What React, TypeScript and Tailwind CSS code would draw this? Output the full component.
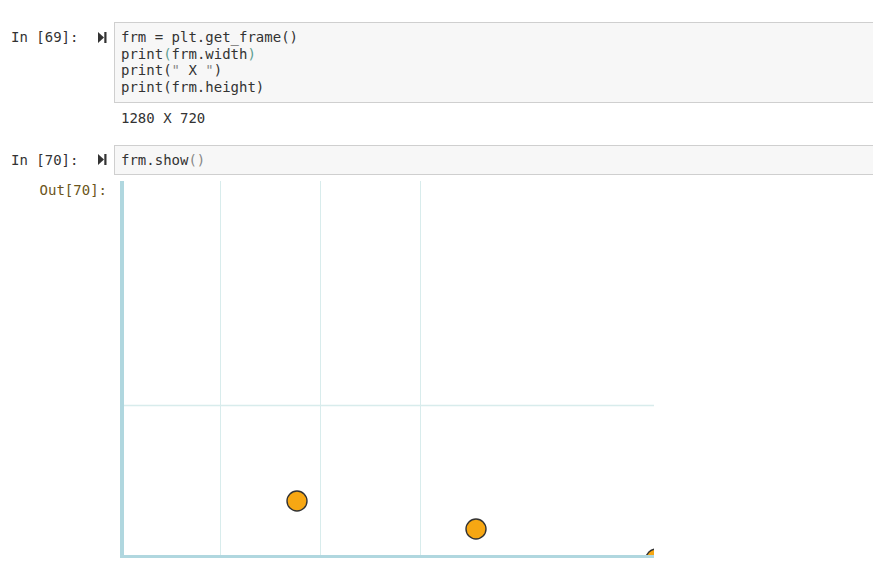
const mono = { fontFamily: '"DejaVu Sans Mono", "Liberation Mono", monospace' };

function RunIcon() {
  return (
    <svg width="9" height="11" viewBox="0 0 9 11" className="block">
      <polygon points="0,0 6,5.5 0,11" fill="#333" />
      <rect x="6.3" y="0" width="2.2" height="11" fill="#333" />
    </svg>
  );
}

function InputCell({ n, children }: { n: number; children: React.ReactNode }) {
  return (
    <div className="flex items-start">
      <div className="w-[114px] shrink-0 flex items-center pl-[11px] pr-[7px] pt-[7px] text-[#333] text-[14px] leading-[16.7px]">
        <span className="whitespace-pre">In [{n}]:</span>
        <span className="ml-auto">
          <RunIcon />
        </span>
      </div>
      <div className="w-[780px] shrink-0 border border-[#cfcfcf] bg-[#f7f7f7] pl-[6px] py-[6px] text-[14px] leading-[16.7px] text-[#333] whitespace-pre">
        {children}
      </div>
    </div>
  );
}

function Plot() {
  const W = 534;
  const H = 377;
  return (
    <svg width={W} height={H} viewBox={`0 0 ${W} ${H}`} className="block">
      <rect x="0" y="0" width={W} height={H} fill="#fff" />
      {[100, 200, 300].map((x) => (
        <line key={x} x1={x + 0.5} y1="0" x2={x + 0.5} y2={H - 3} stroke="#d8ecec" strokeWidth="1" />
      ))}
      <line x1="4" y1="224.5" x2={W} y2="224.5" stroke="#d8ecec" strokeWidth="1.5" />
      <circle cx="177" cy="320" r="10" fill="#f7a713" stroke="#333" strokeWidth="1.4" />
      <circle cx="356" cy="348" r="10" fill="#f7a713" stroke="#333" strokeWidth="1.4" />
      <circle cx="536" cy="378" r="10" fill="#f7a713" stroke="#333" strokeWidth="1.4" />
      <rect x="0" y="0" width="4" height={H} fill="#b0d7df" />
      <rect x="0" y={H - 3} width={W} height="3" fill="#b0d7df" />
    </svg>
  );
}

export default function App() {
  return (
    <div className="w-[873px] h-[571px] overflow-hidden bg-white" style={mono}>
      <div className="pt-[22px]">
        <InputCell n={69}>
          <div>frm = plt.get_frame()</div>
          <div>
            print<span className="text-[#5e9e92]">(</span>frm.width<span className="text-[#5e9e92]">)</span>
          </div>
          <div>
            print(<span className="text-[#888]">"</span> X <span className="text-[#888]">"</span>)
          </div>
          <div>print(frm.height)</div>
        </InputCell>

        <div className="flex pt-[7px] pb-[18px]">
          <div className="w-[114px] shrink-0" />
          <div className="pl-[7px] text-[14px] leading-[16.7px] text-[#333] whitespace-pre">1280 X 720</div>
        </div>

        <InputCell n={70}>
          <div>
            frm.show<span className="text-[#888]">()</span>
          </div>
        </InputCell>

        <div className="flex pt-[6px]">
          <div className="w-[114px] shrink-0 pr-[7px] pt-[1px] text-right text-[14px] leading-[16.7px] text-[#6b5520] whitespace-pre">
            Out[70]:
          </div>
          <div className="pl-[6px]">
            <Plot />
          </div>
        </div>
      </div>
    </div>
  );
}
